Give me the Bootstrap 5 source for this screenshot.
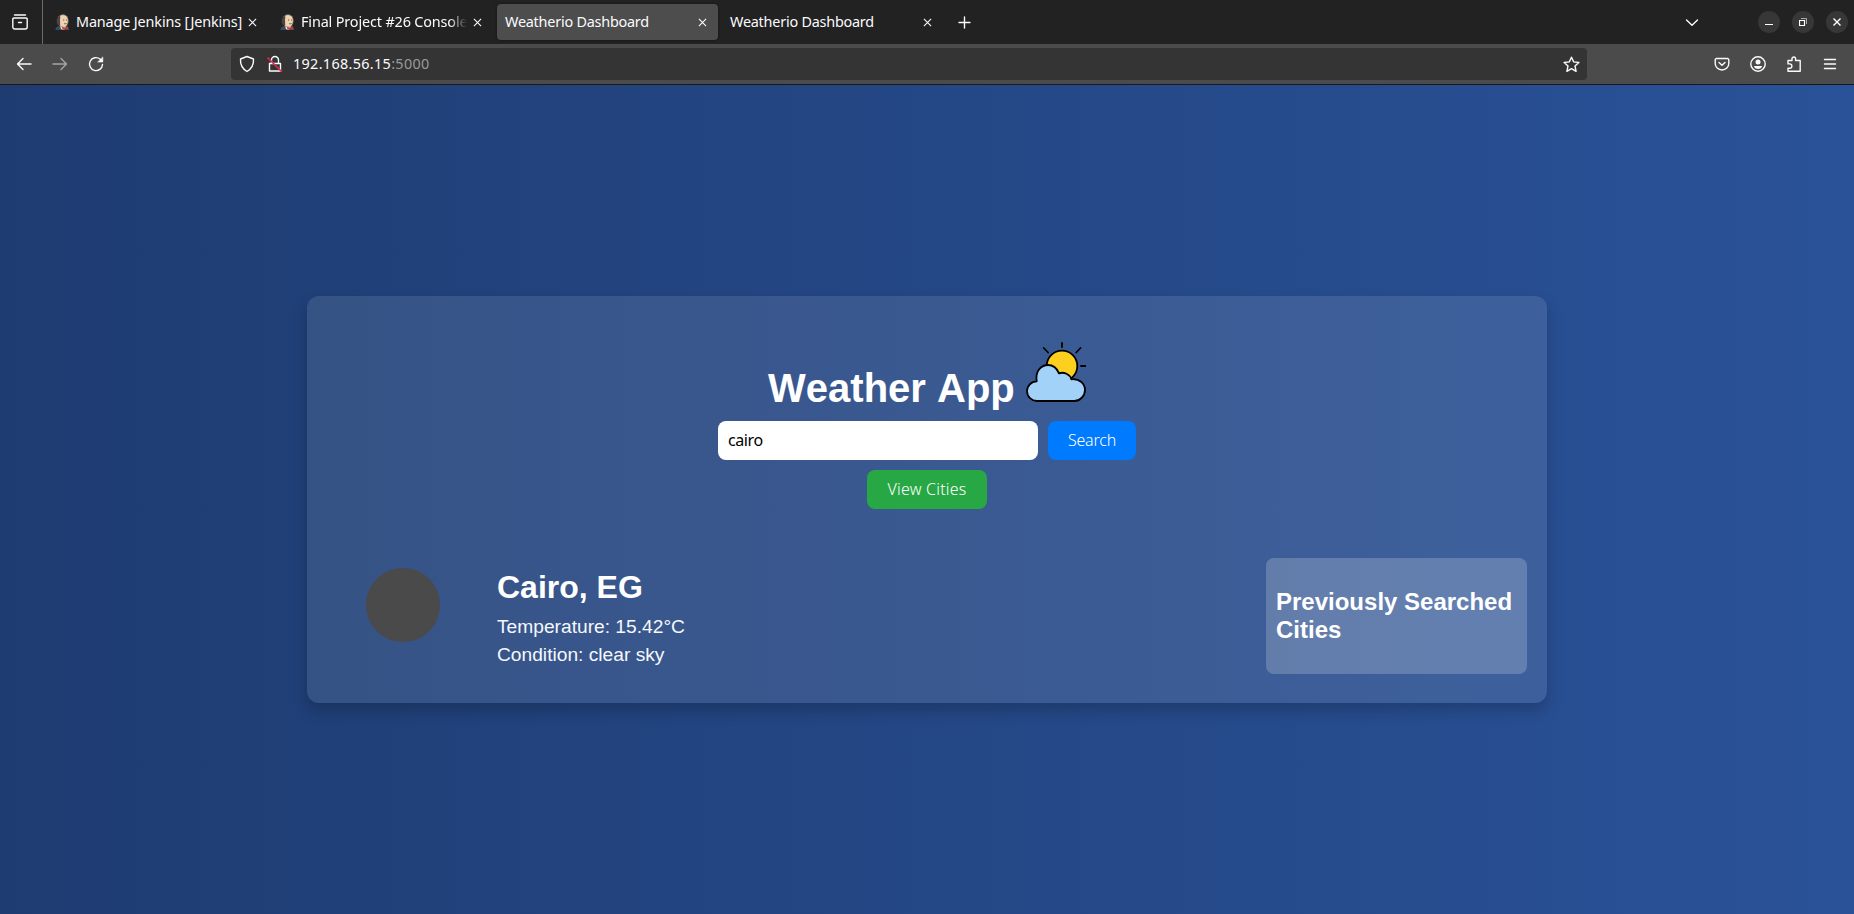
<!DOCTYPE html>
<html lang="en">
<head>
<meta charset="utf-8">
<title>Weatherio Dashboard</title>
<link href="https://cdn.jsdelivr.net/npm/bootstrap@5.3.0/dist/css/bootstrap.min.css" rel="stylesheet">
<script src="https://cdn.jsdelivr.net/npm/bootstrap@5.3.0/dist/js/bootstrap.bundle.min.js" defer></script>
<style>
html, body { height: 100%; overflow: hidden; }
body { font-family: "Liberation Sans", Arial, sans-serif; color: #fff; }
svg { display: block; flex: none; }
.ui-font { font-family: "Noto Sans", "Open Sans", sans-serif; }
.line-icon { fill: none; stroke: #fbfbfe; stroke-width: 1.4; stroke-linecap: round; stroke-linejoin: round; }

/* browser chrome */
.tabstrip { height: 44px; background: #222; }
.view-btn { width: 43px; border-right: 1px solid #6a6a6a; }
.tab-item { width: 221px; height: 36px; margin: 0 2px; padding: 0 8px; border-radius: 4px; }
.tab-item.current { background: #4d4d4d; box-shadow: 0 0 3px rgba(0,0,0,.5); }
.tab-title { font-size: 14.4px; letter-spacing: -.22px; line-height: 20px; color: #fbfbfe; white-space: nowrap; }
.tab-title.with-icon { margin-left: 5px; letter-spacing: -.14px; }
.tab-title.faded { -webkit-mask-image: linear-gradient(to left, transparent, #000 18px); mask-image: linear-gradient(to left, transparent, #000 18px); }
.win-btn { width: 22px; height: 22px; background: #373737; }
.toolbar { height: 41px; background: #4b4b4b; border-bottom: 1px solid #19191b; }
.urlbar { width: 1356px; height: 32px; background: #343434; border-radius: 4px; margin-left: 127px; padding: 0 7px; }
.url-text { font-size: 14.4px; letter-spacing: .33px; color: #fbfbfe; margin-left: 9px; line-height: 20px; }
.url-port { color: #9a9a9b; }

/* page */
.page { background: linear-gradient(to right, #1e3c72, #2a5298); }
.panel { width: 1240px; height: 407px; padding: 46px 20px 29px; border-radius: 12px; background: rgba(255,255,255,.1); box-shadow: 0 8px 16px rgba(0,0,0,.2); }
.app-title { font-size: 40px; line-height: 46px; font-weight: 700; margin-bottom: 10px; height: 69px; font-kerning: none; }
.app-title svg { display: inline-block; vertical-align: baseline; }
.field { width: 320px; height: 39px; border: 0; border-radius: 8px; padding: 0 10px 2px; font-size: 16px; letter-spacing: -.4px; color: #000; background: #fff; }
.act { height: 39px; border: 0; border-radius: 8px; padding: 0 0 2px; color: #fff; font-size: 16px; font-weight: 300; }
.act-search { width: 88px; background: #007bff; letter-spacing: -.2px; }
.act-cities { width: 120px; background: #28a745; letter-spacing: .2px; }
.weather-row { margin-top: 49px; padding-left: 39px; }
.sky-dot { width: 73.500px; height: 73.500px; background: #4a4a4a; margin: 10px 57.500px 0 0; }
.city { font-size: 32px; line-height: 36px; font-weight: 700; margin: 11px 0 8px; }
.info { font-size: 19.2px; line-height: 28px; color: #f5f8fc; }
.history { width: 261px; height: 116px; background: rgba(255,255,255,.2); border-radius: 8px; padding: 30px 10px; }
.history h3 { font-size: 24px; line-height: 28px; font-weight: 700; margin: 0; white-space: nowrap; }
</style>
</head>
<body class="d-flex flex-column m-0">
<svg width="0" height="0" class="position-absolute">
  <symbol id="butler" viewBox="0 0 16 16">
    <path d="M.5 16c0-3 2-4 5-4h6c2 0 2.500 2 2.500 4z" fill="#335061"/>
    <path d="M5 12h6l-1 3-2 1-2-1z" fill="#f0f0ee"/>
    <ellipse cx="8" cy="6.800" rx="5.400" ry="6.300" fill="#eed2b1"/>
    <path d="M5 1.500C1.500 3 1 8 2.500 10.500L5 12c.8-2-.5-3 .2-4.500C4.300 6 6 4 5 1.500z" fill="#4b4443"/>
    <path d="M3.500 3C5 .2 10 0 12 2.500 14 5 13 9 12.500 11c-1 2.500-5 3-7.500 1" fill="none" stroke="#6d5a50" stroke-width=".6"/>
    <path d="M8 6h1.300M11 6h1M9 9.500c1 .5 2 .4 2.600 0" stroke="#493e39" stroke-width=".8" fill="none"/>
    <path d="M7 12.700l2.500 1.100 3-1.300.8 3-3.300-.6L7.500 16z" fill="#d33833"/>
  </symbol>
  <symbol id="x" viewBox="0 0 10 10"><path d="M1 1l8 8M9 1L1 9" fill="none" stroke="#fbfbfe" stroke-width="1.200"/></symbol>
</svg>

<header class="ui-font flex-shrink-0">
  <div class="tabstrip d-flex align-items-center">
    <div class="view-btn h-100 d-flex align-items-center ps-2">
      <svg class="line-icon ms-1" width="16" height="16" viewBox="0 0 16 16"><path d="M2.500 1h11M2 4h12a1.200 1.200 0 0 1 1.200 1.200V13a2 2 0 0 1-2 2H2.800a2 2 0 0 1-2-2V5.200A1.200 1.200 0 0 1 2 4zM6.500 8.500h3"/></svg>
    </div>
    <div class="tab-item d-flex align-items-center ms-1">
      <svg width="16" height="16"><use href="#butler"/></svg>
      <div class="tab-title with-icon">Manage Jenkins [Jenkins]</div>
      <svg class="ms-auto" width="9" height="9" style="margin-right:3px"><use href="#x"/></svg>
    </div>
    <div class="tab-item d-flex align-items-center">
      <svg width="16" height="16"><use href="#butler"/></svg>
      <div class="tab-title with-icon faded">Final Project #26 Console</div>
      <svg class="ms-auto" width="9" height="9" style="margin-right:3px"><use href="#x"/></svg>
    </div>
    <div class="tab-item current d-flex align-items-center">
      <div class="tab-title flex-grow-1">Weatherio Dashboard</div>
      <svg width="9" height="9" style="margin-right:3px"><use href="#x"/></svg>
    </div>
    <div class="tab-item d-flex align-items-center">
      <div class="tab-title flex-grow-1">Weatherio Dashboard</div>
      <svg width="9" height="9" style="margin-right:3px"><use href="#x"/></svg>
    </div>
    <svg class="line-icon" width="13" height="13" viewBox="0 0 13 13" style="margin-left:13px"><path d="M6.500 1v11M1 6.500h11"/></svg>
    <div class="d-flex align-items-center ms-auto">
      <svg class="line-icon" width="14" height="9" viewBox="0 0 14 9" style="margin-right:59px"><path d="M1.500 2L7 7.200 12.500 2"/></svg>
      <div class="d-flex" style="gap:12px;margin-right:6px">
        <div class="win-btn rounded-circle d-flex align-items-center justify-content-center"><svg width="8" height="8"><path d="M0 6.500h8" stroke="#fff"/></svg></div>
        <div class="win-btn rounded-circle d-flex align-items-center justify-content-center"><svg width="8" height="8" fill="none"><path d="M.5 2.500h5v5h-5z" stroke="#fff" stroke-width="1.200"/><path d="M2 .5h5.500V6" stroke="#aaa"/></svg></div>
        <div class="win-btn rounded-circle d-flex align-items-center justify-content-center"><svg width="8" height="8"><path d="M.5.500l7 7M7.500.500l-7 7" stroke="#fff" stroke-width="1.400"/></svg></div>
      </div>
    </div>
  </div>
  <div class="toolbar d-flex align-items-center">
    <div class="d-flex align-items-center" style="margin-left:16px;gap:20px">
      <svg class="line-icon" width="16" height="16" viewBox="0 0 16 16"><path d="M15 8H1.500M7 2.500L1.500 8 7 13.500"/></svg>
      <svg class="line-icon opacity-50" width="16" height="16" viewBox="0 0 16 16"><path d="M1 8h13.500M9 2.500L14.500 8 9 13.500"/></svg>
      <svg class="line-icon" width="16" height="16" viewBox="0 0 16 16"><path d="M14.500 8.500A6.500 6.500 0 1 1 12 3l2 2"/><path d="M14.800 1.300V6H10z" fill="#fbfbfe" stroke-width=".6"/></svg>
    </div>
    <div class="urlbar d-flex align-items-center">
      <svg class="line-icon" width="18" height="18" viewBox="0 0 18 18"><path d="M9 1.500L15.500 4c.4 6-1.500 9.500-6.500 12.500C4 13.500 2.100 10 2.500 4z"/></svg>
      <svg class="line-icon" width="18" height="18" viewBox="0 0 18 18" style="margin-left:10px"><path d="M5.500 5a3.500 3.500 0 0 1 7 0v3M3.500 8.500V16h11V8.500zM5.500 8V6"/><path d="M2 3l13.500 13.500" style="stroke:#e22850;stroke-width:1.600"/></svg>
      <div class="url-text">192.168.56.15<span class="url-port">:5000</span></div>
      <svg class="line-icon ms-auto" width="17" height="17" viewBox="0 0 17 17"><path d="M8.500 1.200l2.200 4.700 5.200.6-3.900 3.500 1.100 5.300-4.600-2.700-4.600 2.700L5 10 1.100 6.500l5.200-.6z"/></svg>
    </div>
    <div class="d-flex align-items-center ms-auto" style="gap:20px;margin-right:16px">
      <svg class="line-icon" width="16" height="16" viewBox="0 0 16 16"><path d="M2.500 2.500h11a1.300 1.300 0 0 1 1.300 1.300V7.500a6.800 6.500 0 0 1-13.600 0V3.800a1.300 1.300 0 0 1 1.300-1.300zM5 6.500L8 9.300l3-2.800"/></svg>
      <svg class="line-icon" width="16" height="16" viewBox="0 0 16 16"><circle cx="8" cy="8" r="7.200"/><circle cx="8" cy="6" r="2.500" fill="#fbfbfe" stroke="none"/><path d="M4 10h8c0 2-2 3-4 3s-4-1-4-3z" fill="#fbfbfe" stroke="none"/></svg>
      <svg class="line-icon" width="16" height="16" viewBox="0 0 16 16"><path d="M2 7.500V4.500h4V2.800a1.800 1.800 0 0 1 3.600 0v1.700h4.600V15.300H2v-3h1.700a2.200 2.200 0 0 0 0-4.400H2z"/></svg>
      <svg class="line-icon" width="16" height="16" viewBox="0 0 16 16"><path d="M2.500 3.500h11M2.500 8h11M2.500 12.500h11"/></svg>
    </div>
  </div>
</header>

<main class="page flex-grow-1 d-flex align-items-center justify-content-center">
  <section class="panel">
    <h1 class="app-title text-center">Weather App <svg width="60" height="60" viewBox="0 0 60 60"><g stroke="#000" stroke-width="1.800" stroke-linecap="round" stroke-linejoin="round"><path d="M36 1v4M17.800 6l4.300 4.500M54.500 6l-4.300 4.500M55 24h4.500" fill="none"/><circle cx="36" cy="24" r="15.300" fill="#fdd020"/><path d="M11 59a9.800 9.800 0 0 1-.3-19.700C9 28 16 23 22 23c5 0 9 3.500 11 8.300 5-1.700 11 1 12.300 6C54 36.500 59 42 59 48s-5 11-10.500 11z" fill="#a2d2f7"/></g></svg></h1>
    <form class="ui-font d-flex flex-wrap justify-content-center" style="gap:10px" onsubmit="return false">
      <input class="field" type="text" value="cairo" aria-label="City">
      <button class="act act-search btn" type="submit">Search</button>
      <div class="w-100 d-flex justify-content-center"><button class="act act-cities btn" type="button">View Cities</button></div>
    </form>
    <div class="weather-row d-flex align-items-start">
      <div class="sky-dot rounded-circle flex-shrink-0"></div>
      <div>
        <h2 class="city">Cairo, EG</h2>
        <p class="info m-0">Temperature: 15.42°C</p>
        <p class="info m-0">Condition: clear sky</p>
      </div>
      <aside class="history ms-auto"><h3>Previously Searched<br>Cities</h3></aside>
    </div>
  </section>
</main>
</body>
</html>
